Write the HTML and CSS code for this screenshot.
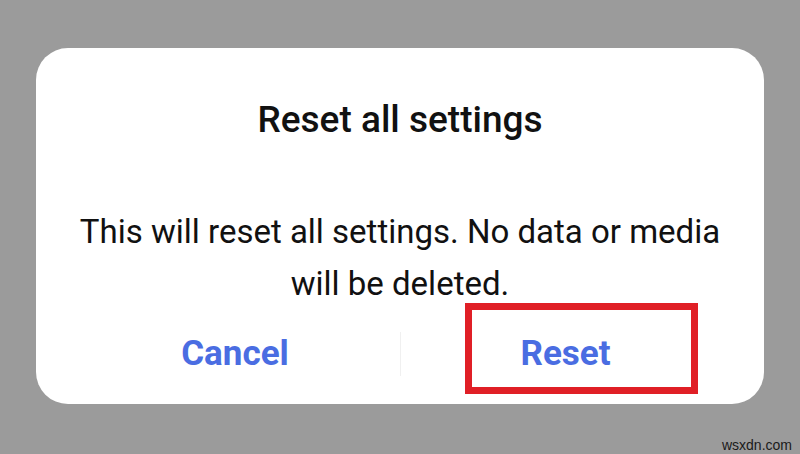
FILE: index.html
```html
<!DOCTYPE html>
<html>
<head>
<meta charset="utf-8">
<link rel="stylesheet" href="styles.css">
</head>
<body>
<div class="dialog">
  <div class="title">Reset all settings</div>
  <div class="message">This will reset all settings. No data or media<br>will be deleted.</div>
  <div class="actions">
    <div class="btn">Cancel</div>
    <div class="btn btn-right">Reset</div>
  </div>
  <div class="highlight"></div>
</div>
<div class="watermark">wsxdn.com</div>
</body>
</html>
```

FILE: styles.css
```css
html, body {
  margin: 0;
  padding: 0;
}
body {
  width: 800px;
  height: 454px;
  background: #9b9b9b;
  position: relative;
  overflow: hidden;
  font-family: Roboto, "Noto Sans", sans-serif;
  padding-top: 48px;
  box-sizing: border-box;
}
.dialog {
  position: relative;
  margin-left: 36px;
  width: 728px;
  height: 356px;
  background: #ffffff;
  border-radius: 32px;
  box-sizing: border-box;
  padding: 50px 34px 0;
  display: flex;
  flex-direction: column;
  align-items: stretch;
}
.title {
  text-align: center;
  font-size: 37px;
  line-height: 44px;
  font-weight: 500;
  color: #111111;
}
.message {
  margin-top: 64px;
  text-align: center;
  font-size: 33px;
  line-height: 52px;
  color: #111111;
}
.actions {
  margin-top: 22px;
  display: grid;
  grid-template-columns: 1fr 1fr;
}
.btn {
  text-align: center;
  font-size: 35px;
  line-height: 44px;
  font-weight: 700;
  color: #4a6de2;
}
.btn-right {
  border-left: 1px solid #f0f0f0;
}
.highlight {
  position: absolute;
  left: 429px;
  top: 255px;
  width: 233px;
  height: 91px;
  box-sizing: border-box;
  border: 7px solid #e01f26;
}
.watermark {
  position: absolute;
  right: 8px;
  bottom: 1px;
  font-family: "Liberation Sans", Arial, sans-serif;
  font-size: 14px;
  color: #1a1a1a;
}
```
